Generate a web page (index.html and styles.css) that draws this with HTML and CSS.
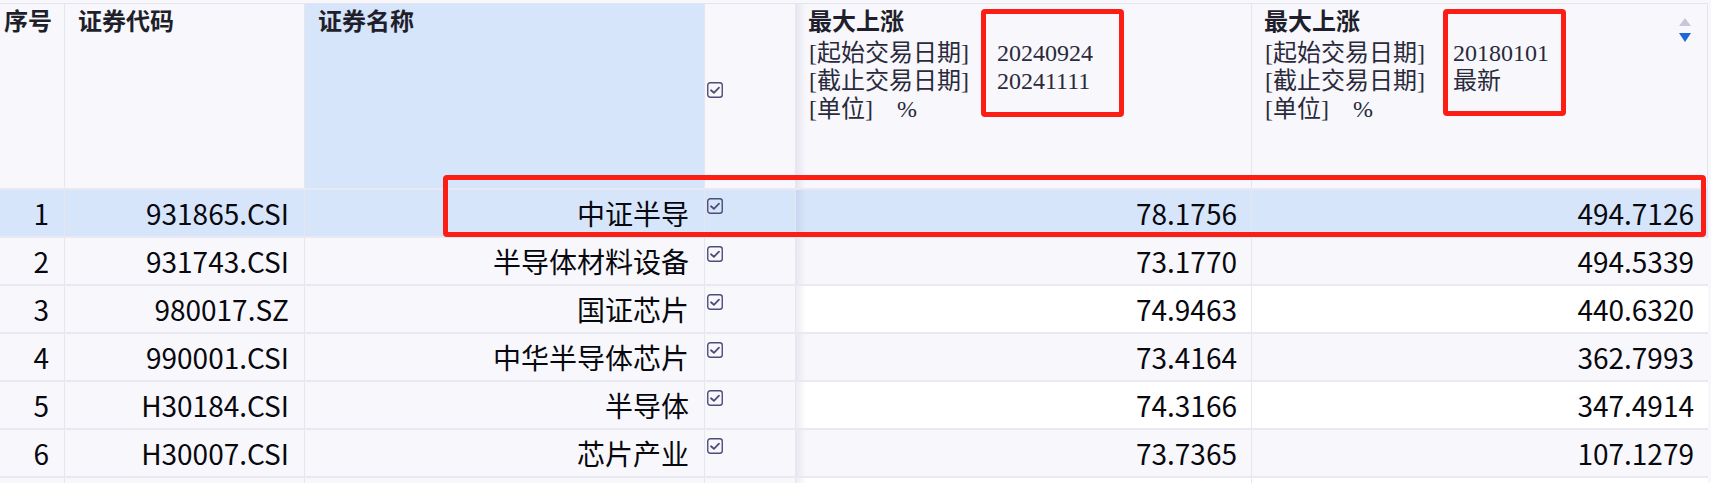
FILE: index.html
```html
<!DOCTYPE html>
<html lang="zh-CN">
<head>
<meta charset="utf-8">
<title>区间涨幅</title>
<link rel="stylesheet" href="styles.css">
</head>
<body>
<div class="page">
  <div class="table">
    <div class="hdr">
      <div class="hc c-idx">序号</div>
      <div class="hc">证券代码</div>
      <div class="hc hc-sel">证券名称</div>
      <div class="hc hc-chk">
        <svg class="chk" viewBox="0 0 16 16" width="16" height="16"><rect x="0.75" y="0.75" width="14.5" height="14.5" rx="2.5"/><path d="M4 8.3 L6.9 10.8 L12 5.6"/></svg>
      </div>
      <div class="hc metric frozen-edge">
        <div class="mt">最大上涨</div>
        <div class="ml"><span class="lab">[起始交易日期]</span><span class="val">20240924</span></div>
        <div class="ml"><span class="lab">[截止交易日期]</span><span class="val">20241111</span></div>
        <div class="ml"><span class="lab unit">[单位]</span><span class="val">%</span></div>
      </div>
      <div class="hc metric last">
        <div class="mt">最大上涨</div>
        <div class="ml"><span class="lab">[起始交易日期]</span><span class="val">20180101</span></div>
        <div class="ml"><span class="lab">[截止交易日期]</span><span class="val">最新</span></div>
        <div class="ml"><span class="lab unit">[单位]</span><span class="val">%</span></div>
        <div class="sort"><span class="up"></span><span class="down"></span></div>
      </div>
    </div>

    <div class="row sel">
      <div class="cell">1</div><div class="cell">931865.CSI</div><div class="cell">中证半导</div>
      <div class="cell ck"><svg class="chk" viewBox="0 0 16 16" width="16" height="16"><rect x="0.75" y="0.75" width="14.5" height="14.5" rx="2.5"/><path d="M4 8.3 L6.9 10.8 L12 5.6"/></svg></div>
      <div class="cell data frozen-edge">78.1756</div><div class="cell data">494.7126</div>
    </div>
    <div class="row even">
      <div class="cell">2</div><div class="cell">931743.CSI</div><div class="cell">半导体材料设备</div>
      <div class="cell ck"><svg class="chk" viewBox="0 0 16 16" width="16" height="16"><rect x="0.75" y="0.75" width="14.5" height="14.5" rx="2.5"/><path d="M4 8.3 L6.9 10.8 L12 5.6"/></svg></div>
      <div class="cell data frozen-edge">73.1770</div><div class="cell data">494.5339</div>
    </div>
    <div class="row">
      <div class="cell">3</div><div class="cell">980017.SZ</div><div class="cell">国证芯片</div>
      <div class="cell ck"><svg class="chk" viewBox="0 0 16 16" width="16" height="16"><rect x="0.75" y="0.75" width="14.5" height="14.5" rx="2.5"/><path d="M4 8.3 L6.9 10.8 L12 5.6"/></svg></div>
      <div class="cell data frozen-edge">74.9463</div><div class="cell data">440.6320</div>
    </div>
    <div class="row even">
      <div class="cell">4</div><div class="cell">990001.CSI</div><div class="cell">中华半导体芯片</div>
      <div class="cell ck"><svg class="chk" viewBox="0 0 16 16" width="16" height="16"><rect x="0.75" y="0.75" width="14.5" height="14.5" rx="2.5"/><path d="M4 8.3 L6.9 10.8 L12 5.6"/></svg></div>
      <div class="cell data frozen-edge">73.4164</div><div class="cell data">362.7993</div>
    </div>
    <div class="row">
      <div class="cell">5</div><div class="cell">H30184.CSI</div><div class="cell">半导体</div>
      <div class="cell ck"><svg class="chk" viewBox="0 0 16 16" width="16" height="16"><rect x="0.75" y="0.75" width="14.5" height="14.5" rx="2.5"/><path d="M4 8.3 L6.9 10.8 L12 5.6"/></svg></div>
      <div class="cell data frozen-edge">74.3166</div><div class="cell data">347.4914</div>
    </div>
    <div class="row even">
      <div class="cell">6</div><div class="cell">H30007.CSI</div><div class="cell">芯片产业</div>
      <div class="cell ck"><svg class="chk" viewBox="0 0 16 16" width="16" height="16"><rect x="0.75" y="0.75" width="14.5" height="14.5" rx="2.5"/><path d="M4 8.3 L6.9 10.8 L12 5.6"/></svg></div>
      <div class="cell data frozen-edge">73.7365</div><div class="cell data">107.1279</div>
    </div>
    <div class="row stub">
      <div class="cell"></div><div class="cell"></div><div class="cell"></div><div class="cell ck"></div><div class="cell data frozen-edge"></div><div class="cell data"></div>
    </div>
  </div>

  <div class="mark mark-a"></div>
  <div class="mark mark-b"></div>
  <div class="mark mark-row"></div>
</div>
</body>
</html>
```

FILE: styles.css
```css
* { box-sizing: border-box; }

html, body {
  margin: 0;
  padding: 0;
  background: #f7f7fc;
  overflow: hidden;
}

.page {
  position: relative;
  width: 1711px;
  height: 483px;
  padding-top: 3px;
  overflow: hidden;
}

.table {
  width: 1708px;
  border-top: 1px solid #e4e4ee;
  border-right: 1px solid #e4e4ee;
}

.hdr,
.row {
  display: grid;
  grid-template-columns: 65px 240px 400px 91px 456px 456px;
}

/* ---------- header ---------- */
.hdr {
  height: 184px;
  background: #f7f7fc;
}

.hc {
  position: relative;
  padding: 4px 0 0 13px;
  border-right: 1px solid #e6e6ef;
  font-family: "Liberation Serif", "Noto Sans CJK SC", serif;
  font-size: 24px;
  line-height: 28px;
  font-weight: 700;
  color: #1f1f2c;
}

.hc.c-idx { padding-left: 4px; }

.hc-sel { background: #d7e5fb; }

.hc-chk {
  display: flex;
  align-items: flex-start;
  padding: 78px 0 0 2px;
}

.hc.last { border-right: none; }

.metric { padding-left: 12px; }

.mt { margin-bottom: 3px; }

.ml {
  display: flex;
  font-weight: 400;
  color: #2a2a3a;
}

.lab {
  width: 189px;
  flex: none;
  padding-left: 1px;
}

.lab.unit { width: 89px; }

.sort {
  position: absolute;
  top: 14px;
  right: 17px;
  display: flex;
  flex-direction: column;
  gap: 7px;
}

.sort .up {
  width: 0;
  height: 0;
  border-left: 6px solid transparent;
  border-right: 6px solid transparent;
  border-bottom: 8px solid #c6c6dc;
}

.sort .down {
  width: 0;
  height: 0;
  border-left: 6px solid transparent;
  border-right: 6px solid transparent;
  border-top: 9px solid #1f66d8;
}

/* ---------- body rows ---------- */
.row {
  height: 48px;
  border-top: 2px solid #e9e9f2;
  background: #f8f8fc;
}

.cell {
  display: flex;
  align-items: center;
  justify-content: flex-end;
  padding: 0 15px 0 0;
  border-right: 1px solid #e6e6ef;
  font-family: "Noto Sans CJK SC", "Noto Sans", sans-serif;
  font-size: 28px;
  line-height: 1;
  color: #08080f;
  white-space: nowrap;
}

.cell:last-child { border-right: none; }

.cell.ck {
  align-items: flex-start;
  justify-content: flex-start;
  padding: 8px 0 0 2px;
}

.cell.data {
  background: #ffffff;
  padding-right: 14px;
}

.row.even .cell.data { background: #f8f8fc; }

.row.sel .cell,
.row.sel .cell.data { background: #d7e5fb; }

.frozen-edge {
  background-image: linear-gradient(to right, rgba(60, 60, 120, 0.09), rgba(60, 60, 120, 0) 10px) !important;
}

.chk {
  display: block;
  fill: none;
  stroke: #4d4d7a;
}

.chk rect { stroke-width: 1.4; }
.chk path { stroke-width: 1.8; stroke-linecap: round; stroke-linejoin: round; }

/* ---------- red annotation boxes ---------- */
.mark {
  position: absolute;
  border: 5px solid #fc1e14;
  border-radius: 4px;
}

.mark-a { left: 981px; top: 9px; width: 143px; height: 108px; }
.mark-b { left: 1443px; top: 9px; width: 123px; height: 107px; }
.mark-row { left: 443px; top: 175px; width: 1263px; height: 62px; }
```
